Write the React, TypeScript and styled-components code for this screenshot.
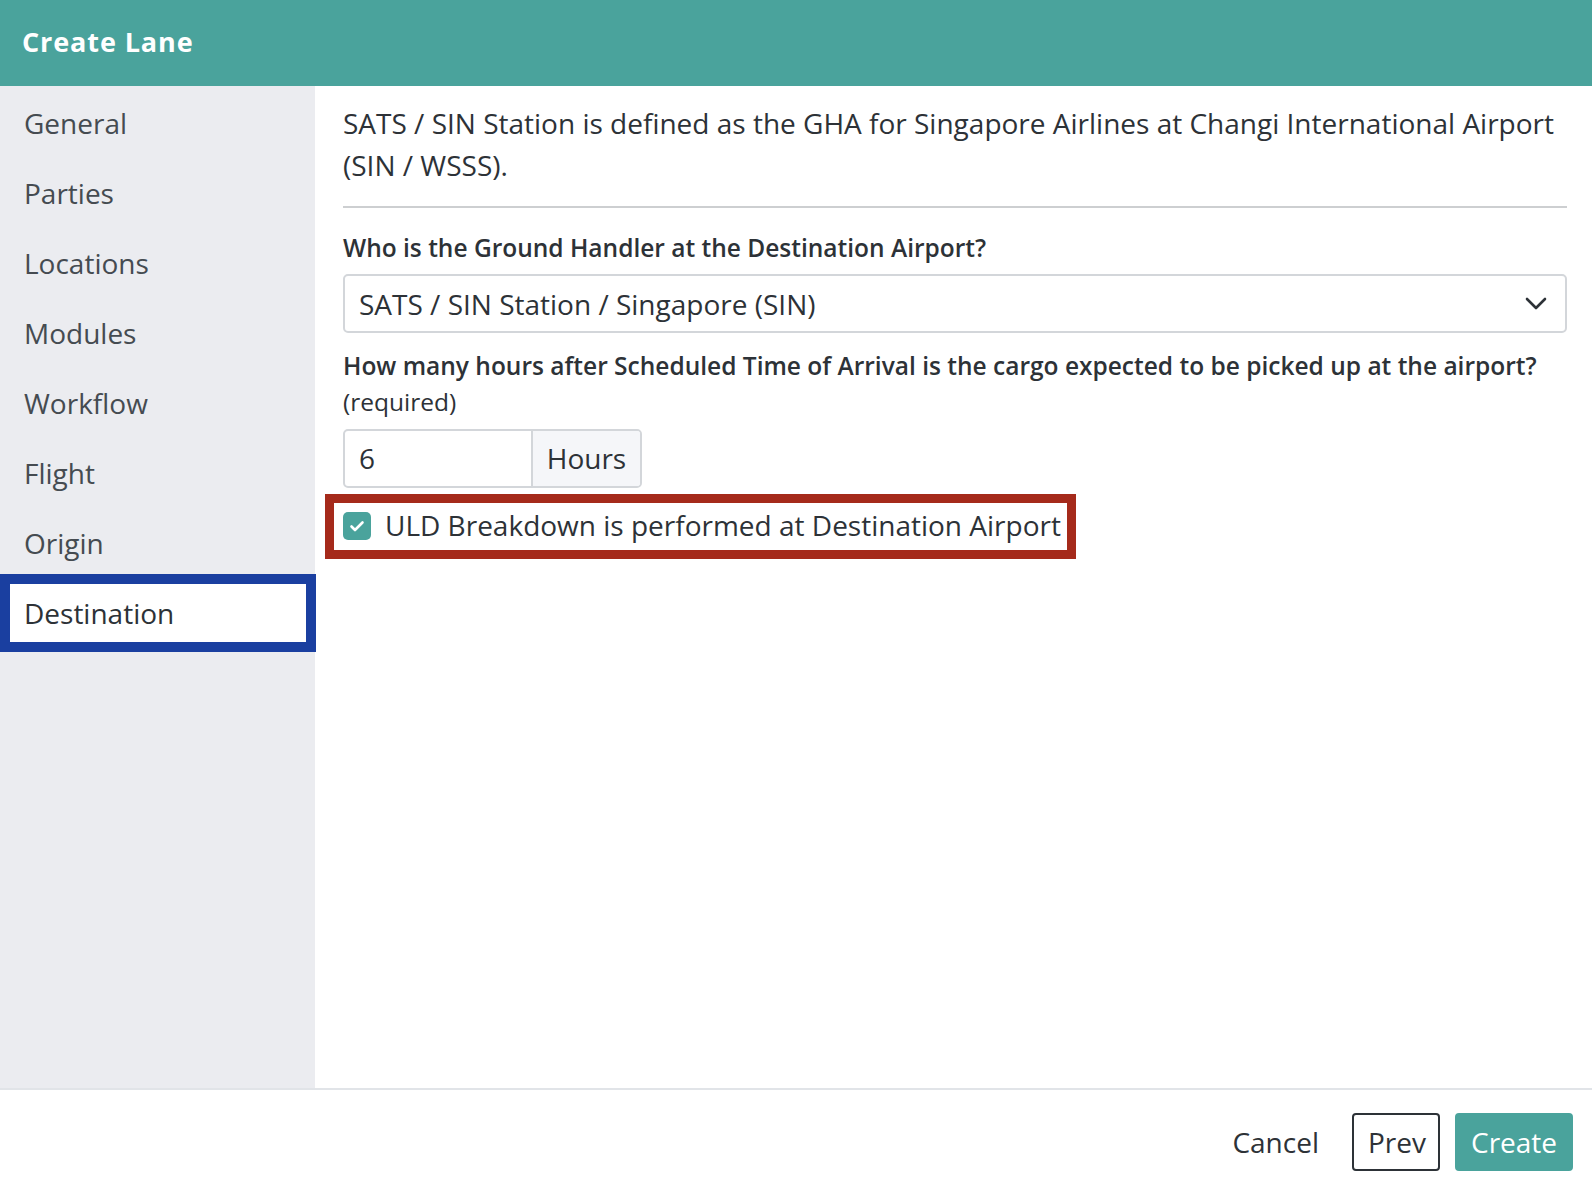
import React from "react";
import styled, { createGlobalStyle } from "styled-components";

const Global = createGlobalStyle`
  html, body { margin: 0; padding: 0; background: #fff; }
  body { font-family: "Open Sans", "Liberation Sans", sans-serif; color: #2d3237; }
  * { box-sizing: border-box; }
`;

const Page = styled.div`
  width: 1592px;
  height: 1194px;
  display: flex;
  flex-direction: column;
  overflow: hidden;
`;

const Header = styled.header`
  height: 86px;
  flex: 0 0 86px;
  background: #4aa39c;
  display: flex;
  align-items: center;
  padding-left: 22px;
  padding-bottom: 3px;
`;

const Title = styled.h1`
  margin: 0;
  color: #fff;
  font-family: "Open Sans", sans-serif;
  font-weight: 700;
  font-size: 27px;
  letter-spacing: 0.9px;
`;

const Body = styled.div`
  flex: 1;
  display: flex;
  min-height: 0;
`;

const Sidebar = styled.nav`
  width: 315px;
  flex: 0 0 315px;
  background: #ebecf0;
  display: flex;
  flex-direction: column;
  padding-top: 2px;
`;

const NavItem = styled.div<{ $active?: boolean }>`
  height: 70px;
  display: flex;
  align-items: center;
  padding-left: ${(p) => (p.$active ? "14px" : "24px")};
  font-size: 28px;
  color: #454b51;
  ${(p) =>
    p.$active &&
    `
    background: #fff;
    border: 10px solid #1a3fa0;
    height: 78px;
    margin: -4px 0;
    width: 316px;
    color: #2d3237;
  `}
`;

const Content = styled.main`
  flex: 1;
  padding: 16px 25px 0 28px;
  display: flex;
  flex-direction: column;
`;

const Intro = styled.p`
  margin: 0;
  font-size: 28px;
  line-height: 42px;
  color: #2d3237;
`;

const Divider = styled.hr`
  margin: 20px 0 22px;
  border: 0;
  border-top: 2px solid #cdcfd1;
`;

const Label = styled.div`
  font-size: 24.5px;
  font-weight: 600;
  line-height: 36px;
  color: #2d3237;
`;

const Hint = styled.div`
  font-size: 24.5px;
  line-height: 36px;
  color: #2d3237;
`;

const Select = styled.div`
  margin-top: 8px;
  height: 59px;
  border: 2px solid #d3d6da;
  border-radius: 5px;
  display: flex;
  align-items: center;
  justify-content: space-between;
  padding: 0 18px 0 14px;
  font-size: 28px;
  color: #2d3237;
  margin-bottom: 15px;
`;

const InputGroup = styled.div`
  margin-top: 9px;
  display: flex;
  width: 299px;
  height: 59px;
  border: 2px solid #d3d6da;
  border-radius: 5px;
  overflow: hidden;
`;

const InputValue = styled.div`
  width: 188px;
  border-right: 2px solid #d3d6da;
  display: flex;
  align-items: center;
  padding-left: 14px;
  padding-bottom: 1px;
  font-size: 28px;
`;

const Addon = styled.div`
  flex: 1;
  background: #f5f6f9;
  display: flex;
  align-items: center;
  justify-content: center;
  padding-bottom: 1px;
  font-size: 28px;
`;

const Highlight = styled.div`
  margin-top: 6px;
  margin-left: -18px;
  align-self: flex-start;
  width: 751px;
  height: 65px;
  border: 9px solid #a52a1b;
  display: flex;
  align-items: center;
  padding-left: 9px;
  padding-bottom: 4px;
  gap: 14px;
`;

const Check = styled.span`
  width: 28px;
  height: 28px;
  margin-top: 2px;
  border-radius: 5px;
  background: #4aa39c;
  display: flex;
  align-items: center;
  justify-content: center;
`;

const CheckLabel = styled.span`
  font-size: 28px;
  color: #2d3237;
`;

const Footer = styled.footer`
  flex: 0 0 106px;
  border-top: 2px solid #e1e4e8;
  display: flex;
  align-items: flex-start;
  justify-content: flex-end;
  padding: 23px 19px 0 0;
  gap: 15px;
`;

const Button = styled.button<{ $variant: "link" | "outline" | "primary" }>`
  height: 58px;
  font-family: "Open Sans", sans-serif;
  font-size: 28px;
  border-radius: 4px;
  padding: 0 14px;
  cursor: pointer;
  border: 2px solid transparent;
  background: transparent;
  color: #2d3237;
  ${(p) => p.$variant === "link" && `margin-right: 0; padding: 0 16px;`}
  ${(p) => p.$variant === "outline" && `border-color: #2d3237; width: 88px;`}
  ${(p) =>
    p.$variant === "primary" &&
    `background: #4aa39c; border-color: #4aa39c; color: #fff; width: 118px;`}
`;

const nav = ["General", "Parties", "Locations", "Modules", "Workflow", "Flight", "Origin", "Destination"];

export default function App() {
  return (
    <Page>
      <Global />
      <Header>
        <Title>Create Lane</Title>
      </Header>
      <Body>
        <Sidebar>
          {nav.map((n) => (
            <NavItem key={n} $active={n === "Destination"}>
              {n}
            </NavItem>
          ))}
        </Sidebar>
        <Content>
          <Intro>
            SATS / SIN Station is defined as the GHA for Singapore Airlines at Changi International Airport (SIN / WSSS).
          </Intro>
          <Divider />
          <Label>Who is the Ground Handler at the Destination Airport?</Label>
          <Select>
            <span>SATS / SIN Station / Singapore (SIN)</span>
            <svg width="22" height="13" viewBox="0 0 22 13" fill="none">
              <path d="M2 2l9 9 9-9" stroke="#2d3237" strokeWidth="2.6" strokeLinecap="round" strokeLinejoin="round" />
            </svg>
          </Select>
          <Label>How many hours after Scheduled Time of Arrival is the cargo expected to be picked up at the airport?</Label>
          <Hint>(required)</Hint>
          <InputGroup>
            <InputValue>6</InputValue>
            <Addon>Hours</Addon>
          </InputGroup>
          <Highlight>
            <Check>
              <svg width="16" height="12" viewBox="0 0 16 12" fill="none">
                <path d="M2.5 6.5l3.5 3.5 7.5-7.5" stroke="#fff" strokeWidth="2.6" strokeLinecap="round" strokeLinejoin="round" />
              </svg>
            </Check>
            <CheckLabel>ULD Breakdown is performed at Destination Airport</CheckLabel>
          </Highlight>
        </Content>
      </Body>
      <Footer>
        <Button $variant="link">Cancel</Button>
        <Button $variant="outline">Prev</Button>
        <Button $variant="primary">Create</Button>
      </Footer>
    </Page>
  );
}
